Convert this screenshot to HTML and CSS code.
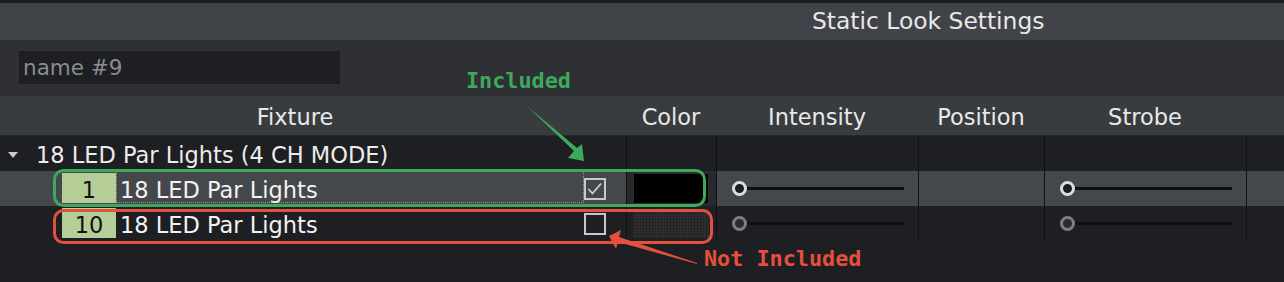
FILE: index.html
```html
<!DOCTYPE html>
<html lang="en">
<head>
  <meta charset="UTF-8">
  <title>Static Look Settings</title>
  <link rel="stylesheet" href="styles.css">
</head>
<body>
  <div class="window">
    <div class="title-bar"><span>Static Look Settings</span></div>
    <div class="name-bar">
      <input class="name-input" type="text" placeholder="name #9">
    </div>

    <div class="look-table">
      <div class="row head-row">
        <div class="cell head fixture-head">Fixture</div>
        <div class="cell head"></div>
        <div class="cell head">Color</div>
        <div class="cell head">Intensity</div>
        <div class="cell head">Position</div>
        <div class="cell head">Strobe</div>
        <div class="cell head"></div>
      </div>

      <div class="row group-row">
        <div class="cell group-name"><span class="caret"></span>18 LED Par Lights (4 CH MODE)</div>
        <div class="cell col"></div>
        <div class="cell col"></div>
        <div class="cell col"></div>
        <div class="cell col"></div>
        <div class="cell col"></div>
      </div>

      <div class="row fixture-row selected">
        <div class="cell fixture-cell">
          <span class="fx-num">1</span>
          <span class="fx-name focused">18 LED Par Lights</span>
        </div>
        <div class="cell check-cell"><span class="checkbox checked">
          <svg viewBox="0 0 22 22" width="22" height="22"><path d="M4.5 11 L8.5 15.5 L17 5.5" fill="none" stroke="#cfcfcf" stroke-width="1.8"/></svg>
        </span></div>
        <div class="cell col color-cell"><span class="swatch"></span></div>
        <div class="cell col"><span class="slider"><span class="knob"></span><span class="track"></span></span></div>
        <div class="cell col"></div>
        <div class="cell col"><span class="slider"><span class="knob"></span><span class="track"></span></span></div>
        <div class="cell col"></div>
      </div>

      <div class="row fixture-row">
        <div class="cell fixture-cell">
          <span class="fx-num">10</span>
          <span class="fx-name">18 LED Par Lights</span>
        </div>
        <div class="cell check-cell"><span class="checkbox"></span></div>
        <div class="cell col color-cell"><span class="swatch empty"></span></div>
        <div class="cell col"><span class="slider off"><span class="knob"></span><span class="track"></span></span></div>
        <div class="cell col"></div>
        <div class="cell col"><span class="slider off"><span class="knob"></span><span class="track"></span></span></div>
        <div class="cell col"></div>
      </div>
    </div>

    <!-- annotation layer drawn over the screenshot -->
    <svg class="marks" width="1284" height="282" viewBox="0 0 1284 282">
      <rect x="54.5" y="170.5" width="650" height="35" rx="9" fill="none" stroke="#3ca95c" stroke-width="3"/>
      <rect x="54.5" y="210.5" width="657" height="32" rx="9" fill="none" stroke="#e5503c" stroke-width="3"/>
      <polygon points="527,106 577,148 582,144 584,161 568,158 574,151" fill="#3ca95c"/>
      <polygon points="697,263 619,237 621,230 609,236 616,249 618,242 697,264" fill="#e5503c"/>
    </svg>
    <span class="note note-in">Included</span>
    <span class="note note-out">Not Included</span>
  </div>
</body>
</html>
```

FILE: styles.css
```css
/* Page */
html, body {
  margin: 0;
  padding: 0;
  background: #1e1f22;
}
.window {
  position: relative;
  width: 1284px;
  height: 282px;
  overflow: hidden;
  font-family: "DejaVu Sans", "Liberation Sans", sans-serif;
  font-size: 22.5px;
  color: #ececec;
  background: #1e1f22;
  border-top: 3px solid #1b1c1e;
  box-sizing: border-box;
}

/* Title and name field */
.title-bar {
  height: 37px;
  background: #404347;
  padding-left: 812px;
  line-height: 37px;
  font-size: 23.4px;
  color: #e8e8e8;
  white-space: nowrap;
}
.name-bar {
  height: 56px;
  background: #2e3033;
  padding: 11px 0 0 19px;
  box-sizing: border-box;
}
.name-input {
  display: block;
  width: 321px;
  height: 33px;
  margin: 0;
  padding: 0 0 0 4px;
  border: none;
  outline: none;
  background: #1e1f22;
  color: #d0d0d0;
  font-family: inherit;
  font-size: 21.5px;
  box-sizing: border-box;
}
.name-input::placeholder {
  color: #8a8c8f;
}

/* Table */
.row {
  display: grid;
  grid-template-columns: 584px 42px 90px 202px 126px 202px 1fr;
}
.cell {
  display: flex;
  align-items: center;
  min-width: 0;
  white-space: nowrap;
}
.col {
  border-left: 1px solid #0f1012;
}
.head-row {
  height: 40px;
  padding-top: 2px;
  box-sizing: border-box;
  background: #393c3f;
  border-bottom: 1px solid #26282b;
}
.head {
  justify-content: center;
  color: #e8e8e8;
}
.fixture-head {
  padding-left: 6px;
}
.group-row {
  height: 35px;
}
.group-name {
  grid-column: span 2;
  padding-left: 8px;
  padding-top: 3px;
  box-sizing: border-box;
}
.caret {
  width: 0;
  height: 0;
  margin: 0 18px 0 0;
  border-left: 5px solid transparent;
  border-right: 5px solid transparent;
  border-top: 6px solid #c9c9c9;
}

.fixture-row {
  height: 35px;
}
.fixture-row.selected {
  background: #45484b;
}
.fixture-cell {
  padding-left: 62px;
  align-items: stretch;
  padding-top: 2px;
  padding-bottom: 3px;
}
.fx-num {
  width: 54px;
  flex: none;
  background: #b5cd96;
  color: #111;
  text-align: center;
  padding-top: 4px;
  line-height: 26px;
}
.fx-name {
  flex: 1;
  padding-left: 3px;
  padding-top: 4px;
  line-height: 24px;
  color: #f2f2f2;
  border: 1px dotted transparent;
}
.fx-name.focused {
  border-color: #9a9a9a;
  margin-top: -2px;
  padding-top: 6px;
}

.checkbox {
  width: 22px;
  height: 22px;
  border: 2px solid #c8c8c8;
  box-sizing: border-box;
  display: flex;
  align-items: center;
  justify-content: center;
}
.checkbox svg {
  flex: none;
}

.color-cell {
  padding-left: 6px;
}
.selected .color-cell {
  background: #27292c;
}
.swatch {
  width: 76px;
  height: 31px;
  background: #000;
  border: 1px solid #2c2d2f;
  box-sizing: border-box;
}
.swatch.empty {
  height: 29px;
  border: none;
  background-color: #2b2c2e;
  background-image: radial-gradient(#151617 40%, transparent 45%);
  background-size: 3px 3px;
}

.slider {
  display: flex;
  align-items: center;
  width: 172px;
  margin-left: 15px;
}
.knob {
  flex: none;
  width: 15px;
  height: 15px;
  border: 3px solid #dcdcdc;
  border-radius: 50%;
  background: #1c1d1f;
  box-sizing: border-box;
}
.track {
  flex: 1;
  height: 3px;
  background: #0e0f10;
}
.slider.off .knob {
  border-color: #7d7f81;
  background: #2a2b2d;
}

/* Annotations */
.marks {
  position: absolute;
  left: 0;
  top: -3px;
  pointer-events: none;
}
.note {
  position: absolute;
  font-family: "DejaVu Sans Mono", "Liberation Mono", monospace;
  font-weight: bold;
  font-size: 21.8px;
  line-height: 1;
  white-space: nowrap;
}
.note-in {
  left: 466px;
  top: 67px;
  color: #3ca95c;
}
.note-out {
  left: 704px;
  top: 245px;
  color: #e5503c;
}
```
